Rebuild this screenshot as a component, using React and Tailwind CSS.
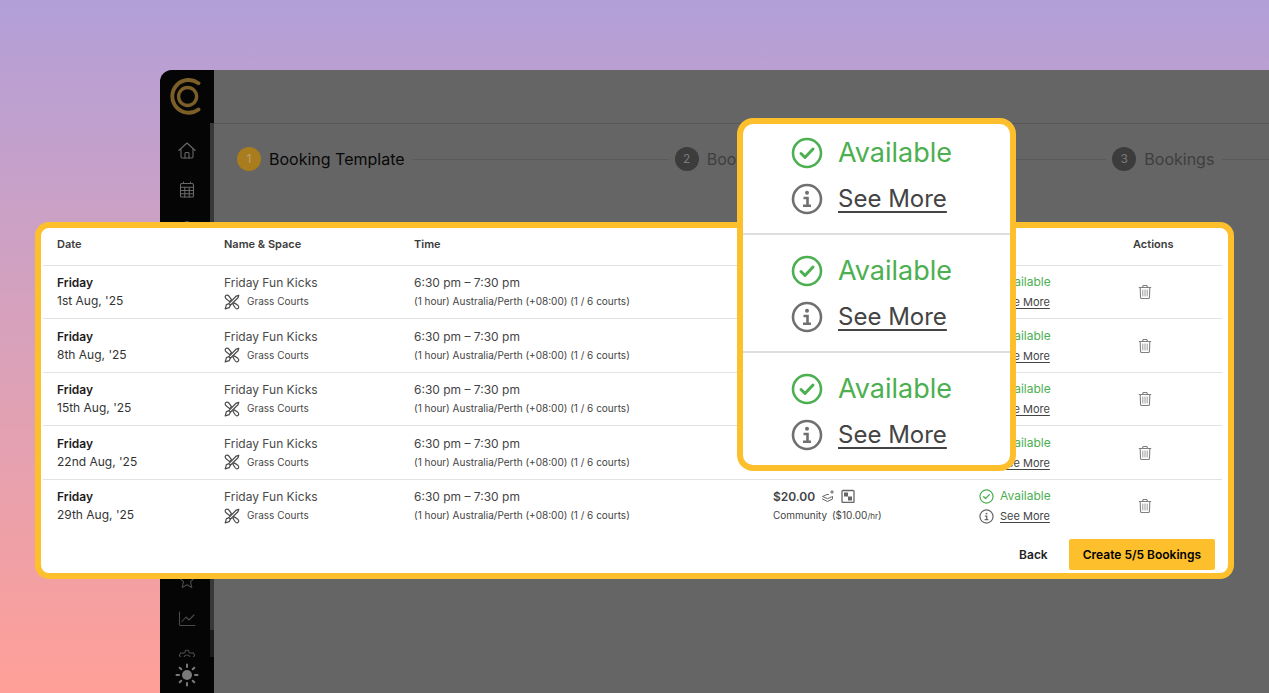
import {
  Bell,
  Building2,
  CreditCard,
  FileText,
  Folder,
  Mail,
  MapPin,
  Tag,
  Users,
} from "lucide-react";

const HomeIcon = () => (
  <svg viewBox="0 0 18 18" className="w-[18px] h-[18px]" fill="none" stroke="currentColor" strokeWidth="1.1" strokeLinecap="round" strokeLinejoin="round">
    <path d="M.8 8.500 9 1l8.200 7.500" />
    <path d="M3 7v7.500c0 .9.600 1.500 1.500 1.500h9c.9 0 1.500-.6 1.500-1.500V7" />
    <path d="M7 16v-4.500c0-.6.400-1 1-1h2c.6 0 1 .400 1 1V16" />
  </svg>
);

const CalendarIcon = () => (
  <svg viewBox="0 0 18 18" className="w-[18px] h-[18px]" fill="none" stroke="currentColor" strokeWidth="1.1" strokeLinecap="round">
    <rect x="2.500" y="2.500" width="13" height="13.500" rx="1.300" />
    <path d="M5.500 1v1.500M12.500 1v1.500M2.500 6.200h13M2.500 9.500h13M2.500 12.700h13M6.800 6.200V16M11.200 6.200V16" />
  </svg>
);

const StarIcon = () => (
  <svg viewBox="0 0 18 18" className="w-[18px] h-[18px]" fill="none" stroke="currentColor" strokeWidth="1.1" strokeLinejoin="round">
    <path d="m9 1.500 2.200 4.900 5.300.6-4 3.600 1.300 5.900L9 13.800l-4.800 2.700 1.300-5.900-4-3.600 5.300-.6z" />
  </svg>
);

const ChartIcon = () => (
  <svg viewBox="0 0 18 18" className="w-[18px] h-[18px]" fill="none" stroke="currentColor" strokeWidth="1.1" strokeLinecap="round" strokeLinejoin="round">
    <path d="M1.500 2v12.500c0 .6.400 1 1 1H17" />
    <path d="m4 11.500 4-4.500 3 3 5-5" />
  </svg>
);

const GearIcon = () => (
  <svg viewBox="0 0 18 18" className="w-[18px] h-[18px]" fill="none" stroke="currentColor" strokeWidth="1.1" strokeLinejoin="round">
    <path d="M7.700 1.200h2.600l1 2.400 1.300.7 2.600-.5 1.500 2.500-1.700 2v1.400l1.700 2-1.500 2.500-2.600-.5-1.300.7-1 2.400H7.700l-1-2.400-1.300-.7-2.600.5-1.500-2.500 1.700-2V8.300l-1.700-2 1.500-2.500 2.600.5 1.300-.7z" />
    <circle cx="9" cy="9" r="3" />
  </svg>
);

const SunIcon = () => (
  <svg viewBox="0 0 24 24" className="w-6 h-6" fill="none" stroke="currentColor" strokeWidth="2" strokeLinecap="round">
    <circle cx="12" cy="12" r="5" fill="currentColor" stroke="none" />
    <path d="M12 1.500v2.500M12 20v2.500M1.500 12H4M20 12h2.500M4.700 4.700l1.600 1.600M17.700 17.700l1.600 1.600M4.700 19.300l1.600-1.600M17.700 6.300l1.600-1.600" />
  </svg>
);

const Logo = () => (
  <svg viewBox="0 0 38 38" className="w-[38px] h-[38px]" fill="none" stroke="#7c5f28" strokeWidth="3.900" strokeLinecap="round">
    <path d="M30.500 5.200A16.400 16.400 0 1 0 30.500 31.500" />
    <circle cx="19.600" cy="18.500" r="9" strokeWidth="3.400" />
  </svg>
);

const CheckCircle = ({ className }) => (
  <svg viewBox="0 0 32 32" className={className} fill="none" stroke="currentColor" strokeWidth="2.600" strokeLinecap="round" strokeLinejoin="round">
    <circle cx="16" cy="16" r="14" />
    <path d="m10 16.500 4 4 8-8.500" strokeWidth="3" />
  </svg>
);

const InfoCircle = ({ className }) => (
  <svg viewBox="0 0 32 32" className={className} fill="none" stroke="currentColor" strokeWidth="2.600">
    <circle cx="16" cy="16" r="14" />
    <circle cx="16" cy="9.800" r="2" fill="currentColor" stroke="none" />
    <path d="M12.500 15h4v7.500M12 22.800h8" />
  </svg>
);

const CourtIcon = () => (
  <svg viewBox="0 0 16 16" className="w-4 h-4" fill="none" stroke="currentColor" strokeWidth="1.2" strokeLinejoin="round" strokeLinecap="round">
    <path d="M1.200 3c0-1.100.8-1.800 1.800-1.800.8 0 1.400.3 1.900 1L7.500 5.700 5.600 7.600 2.100 4.800c-.6-.4-.9-1.100-.9-1.800z" />
    <path d="m9 10.500 1.600-1.600 3.500 2.700c1.200 1.100.6 3.200-1.200 3.200-.6 0-1.100-.3-1.500-.8z" />
    <path d="M14.800 1.200 12.300 2 4.800 9.700l1.500 1.500L14 3.800z" />
    <path d="m4.800 9.700-2.400.9-1.200 4.200 4-1.100 1.100-2.500" />
  </svg>
);

const LayersIcon = () => (
  <svg viewBox="0 0 14 14" className="w-3.5 h-3.5" fill="none" stroke="currentColor" strokeWidth="1" strokeLinejoin="round" strokeLinecap="round">
    <path d="M7.500 5.500H6L1.500 7.500 6.500 9.700l5-2.200M1.500 10l5 2.500 5-2.500V8.500M11 1.500v3M9.500 3h3" />
  </svg>
);

const GridIcon = () => (
  <svg viewBox="0 0 14 14" className="w-3.5 h-3.5" fill="none" stroke="currentColor">
    <rect x="1" y="1.500" width="12" height="12" rx="1" strokeWidth="1.300" />
    <path d="M3 3.500h4v4H3zM7 7.500h4v4H7z" fill="currentColor" stroke="none" />
  </svg>
);

const TrashIcon = () => (
  <svg viewBox="0 0 14 16" className="w-3.5 h-4" fill="none" stroke="currentColor" strokeWidth="1.100" strokeLinejoin="round" strokeLinecap="round">
    <path d="M1.200 3.500h11.600M4.500 3.200l.7-1.700h3.600l.7 1.700M2.200 3.500l.3 9.700c0 .8.500 1.300 1.300 1.300h6.400c.8 0 1.300-.5 1.300-1.300l.3-9.700" />
    <path d="M4.800 6v6M7 6v6M9.200 6v6" strokeWidth=".8" />
  </svg>
);

const navItems = [
  { name: "Home", icon: HomeIcon },
  { name: "Calendar", icon: CalendarIcon },
  { name: "Alerts", icon: Bell },
  { name: "People", icon: Users },
  { name: "Venues", icon: Building2 },
  { name: "Locations", icon: MapPin },
  { name: "Payments", icon: CreditCard },
  { name: "Invoices", icon: FileText },
  { name: "Messages", icon: Mail },
  { name: "Files", icon: Folder },
  { name: "Offers", icon: Tag },
  { name: "Favourites", icon: StarIcon },
  { name: "Reports", icon: ChartIcon },
  { name: "Settings", icon: GearIcon },
];

const steps = ["Booking Template", "Booking", "Bookings"];

const bookings = ["1st Aug, '25", "8th Aug, '25", "15th Aug, '25", "22nd Aug, '25", "29th Aug, '25"];

const Sidebar = () => (
  <aside className="w-[54px] shrink-0 flex flex-col bg-[#050505]">
    <div className="h-[53px] shrink-0 flex items-center justify-center">
      <Logo />
    </div>
    <div className="flex-1 min-h-0 flex overflow-hidden">
      <nav className="flex-1 pl-1 pt-2">
        {navItems.map(({ name, icon: Icon }, index) => (
          <button
            key={name}
            aria-label={name}
            className={`w-full h-[39px] flex items-center justify-center ${index > 10 ? "text-[#4a4a4a]" : "text-[#686868]"}`}
          >
            <Icon size={18} strokeWidth={1} />
          </button>
        ))}
      </nav>
      <div className="w-1 bg-[#1c1c1c]">
        <div className="h-[95%] bg-[#383838]" />
      </div>
    </div>
    <button aria-label="Toggle theme" className="h-9 shrink-0 flex items-center justify-center text-[#7a7a7a]">
      <SunIcon />
    </button>
  </aside>
);

const Stepper = () => (
  <ol className="grid grid-cols-3 pl-[23px] pt-[23px] -mr-[281px]">
    {steps.map((step, index) => (
      <li key={step} className="flex items-center gap-2 pr-1.5">
        <span
          className={`w-6 h-6 rounded-full flex items-center justify-center text-xs ${
            index === 0 ? "bg-[#a97d1d] text-[#b5a47a]" : "bg-[#3c3c3c] text-[#7a7a7a]"
          }`}
        >
          {index + 1}
        </span>
        <span className={`text-base ${index === 0 ? "text-[#080808]" : "text-[#3e3e3e]"}`}>{step}</span>
        <span className="flex-1 h-px bg-[#5a5a5a]" />
      </li>
    ))}
  </ol>
);

const BookingRow = ({ date }) => (
  <tr className="h-[53px] even:h-[54px] *:border-t *:border-[#e2e2e2] *:pl-3.5 *:py-0">
    <td className="text-xs leading-[18px] text-[#333]">
      <div className="font-semibold text-[#1c1c1c]">Friday</div>
      <div>{date}</div>
    </td>
    <td className="leading-[19px] text-[#4a4a4a]">
      <div className="text-xs leading-[19px]">Friday Fun Kicks</div>
      <div className="flex items-center gap-[7px] text-[10px]">
        <CourtIcon />
        Grass Courts
      </div>
    </td>
    <td className="leading-[19px] text-[#444]">
      <div className="text-xs leading-[19px]">6:30 pm – 7:30 pm</div>
      <div className="text-[10px]">(1 hour) Australia/Perth (+08:00) (1 / 6 courts)</div>
    </td>
    <td className="leading-[19px] text-[#444]">
      <div className="flex items-center text-xs leading-[19px] font-semibold">
        $20.00
        <span className="flex gap-1.5 pl-1.5 text-[#666]">
          <LayersIcon />
          <GridIcon />
        </span>
      </div>
      <div className="text-[10px]">
        Community <span className="pl-0.5">($10.00<span className="text-[8px]">/hr</span>)</span>
      </div>
    </td>
    <td className="leading-5">
      <div className="flex items-center gap-1.5 text-xs leading-5 text-[#4caf50]">
        <CheckCircle className="w-[15px] h-[15px]" />
        Available
      </div>
      <div className="flex items-center gap-1.5 text-[11px] text-[#666]">
        <InfoCircle className="w-[15px] h-[15px]" />
        <a href="#" className="underline underline-offset-2 text-[#444]">See More</a>
      </div>
    </td>
    <td>
      <button aria-label={`Delete ${date}`} className="block ml-[5px] text-[#808080]">
        <TrashIcon />
      </button>
    </td>
  </tr>
);

const BookingsCard = () => (
  <section className="absolute inset-x-[35px] top-[222px] border-6 border-[#fdc02c] rounded-[14px] bg-white pl-0.5 pr-1.5 pb-[3px]">
    <table className="w-full table-fixed border-separate border-spacing-0">
      <thead>
        <tr className="h-[37px] text-left text-[11px] text-[#3c3c3c] *:font-semibold *:pl-3.5 *:pt-0 *:pb-1">
          <th className="w-[167px]">Date</th>
          <th className="w-[190px]">Name &amp; Space</th>
          <th>Time</th>
          <th className="w-[206px]"></th>
          <th className="w-[154px]"></th>
          <th className="w-[103px]">Actions</th>
        </tr>
      </thead>
      <tbody>
        {bookings.map((date) => (
          <BookingRow key={date} date={date} />
        ))}
      </tbody>
    </table>
    <div className="flex items-center justify-end gap-[7px] pt-[7px] pr-[7px] text-xs font-semibold">
      <button className="h-[31px] px-3.5 text-[#222]">Back</button>
      <button className="h-[31px] px-3.5 rounded-xs bg-[#fdc02c] text-black">Create 5/5 Bookings</button>
    </div>
  </section>
);

// enlarged view of the status column
const StatusCallout = () => (
  <section className="absolute left-[737px] top-[118px] w-[279px] border-6 border-[#fdc02c] rounded-[16px] bg-white overflow-hidden">
    {[0, 1, 2].map((item) => (
      <div
        key={item}
        className="flex flex-col gap-1.5 pl-12 pt-4 pb-3.5 border-t-2 border-[#dedede] first:border-t-0 first:pt-[9px] last:pb-2.5 leading-10"
      >
        <div className="flex items-center gap-[15px] text-[27px] text-[#4caf50]">
          <CheckCircle className="w-8 h-8" />
          Available
        </div>
        <div className="flex items-center gap-[15px] text-[24px] text-[#707070]">
          <InfoCircle className="w-8 h-8" />
          <a href="#" className="underline decoration-2 underline-offset-4 text-[#444]">See More</a>
        </div>
      </div>
    ))}
  </section>
);

const App = () => {
  return (
    <div className="relative h-screen overflow-hidden flex pl-40 pt-[70px] bg-linear-to-b from-[#b29fd8] to-[#ff9f97] font-['Inter',sans-serif]">
      <div className="flex-1 min-w-0 flex rounded-tl-xl overflow-hidden bg-[#656565]">
        <Sidebar />
        <main className="flex-1 min-w-0">
          <header className="h-[54px] border-b border-[#575757]" />
          <Stepper />
        </main>
      </div>
      <BookingsCard />
      <StatusCallout />
    </div>
  );
};

export default App;
